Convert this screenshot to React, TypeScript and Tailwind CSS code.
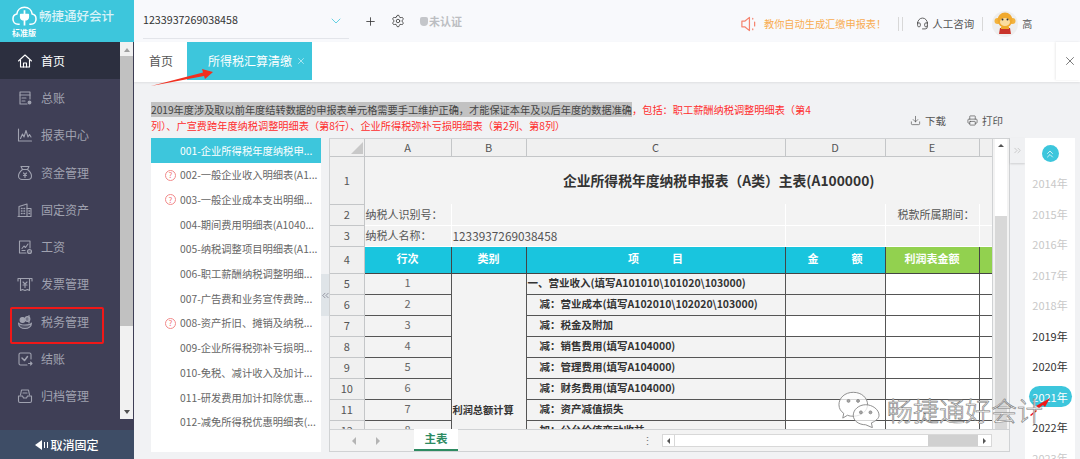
import { ChevronDown, ChevronsLeft, ChevronsRight, ChevronsUp, Headset, Home, Plus, Printer, Settings, Download, X } from "lucide-react"
import type { ReactNode } from "react"

function NavIcon({ children }: { children: ReactNode }) {
  return (
    <svg viewBox="0 0 16 16" className="h-[16px] w-[16px] shrink-0" fill="none" stroke="currentColor" strokeWidth="1.1" strokeLinecap="round" strokeLinejoin="round">
      {children}
    </svg>
  )
}

const nav = [
  {
    name: "首页",
    active: true,
    icon: (
      <>
        <path d="M1.5 8 L8 2 L14.5 8" />
        <path d="M3.5 7 V14 H12.5 V7" />
        <path d="M6.5 14 V10 H9.5 V14" />
      </>
    ),
  },
  {
    name: "总账",
    icon: (
      <>
        <path d="M10 14 H3 V2 H13 V9" />
        <path d="M3 5 H13 M5 8 H9 M5 11 H8" />
        <circle cx="12.5" cy="12.5" r="1.4" fill="currentColor" />
      </>
    ),
  },
  {
    name: "报表中心",
    icon: (
      <>
        <path d="M1.5 2 V14 H14.5" />
        <path d="M3.5 11.5 L5.5 7 L7 10 L9 3.5 L11 10 L12.5 7.5 L14 10" />
      </>
    ),
  },
  {
    name: "资金管理",
    icon: (
      <>
        <path d="M5.5 4.5 L4 1.5 H12 L10.5 4.5" />
        <path d="M5.5 4.5 H10.5 C13 6.5 14.5 9 14.5 11 C14.5 13.5 12.5 14.5 11 14.5 H5 C3.5 14.5 1.5 13.5 1.5 11 C1.5 9 3 6.5 5.5 4.5 Z" />
        <path d="M6.5 8 L8 9.5 L9.5 8 M8 9.5 V12.5 M6.5 10.5 H9.5" />
      </>
    ),
  },
  {
    name: "固定资产",
    icon: (
      <>
        <path d="M2 14.5 V4.5 L10 2 V14.5" />
        <path d="M10 6.5 H14 V14.5 H1" />
        <path d="M4.5 6.5 H5 M7 6.5 H7.5 M4.5 9 H5 M7 9 H7.5 M4.5 11.5 H5 M7 11.5 H7.5 M12 9 H12.5 M12 11.5 H12.5" strokeWidth="1.5" />
      </>
    ),
  },
  {
    name: "工资",
    icon: (
      <>
        <path d="M9 14 H2.5 V2 H13 V9" />
        <path d="M5 9.5 L7 7 L8.5 8.5 L11 5" />
        <path d="M5 11.5 H8" />
        <circle cx="12.5" cy="12.5" r="2" fill="currentColor" fillOpacity="0.4" />
      </>
    ),
  },
  {
    name: "发票管理",
    icon: (
      <>
        <path d="M1 2.5 H15 V5 M1 2.5 V5" />
        <path d="M3.5 2.5 V14.5 L5.5 13.5 L8 14.5 L10.5 13.5 L12.5 14.5 V2.5" />
        <path d="M6 6 L8 8 L10 6 M8 8 V11.5 M6 9 H10" />
      </>
    ),
  },
  {
    name: "税务管理",
    icon: (
      <>
        <path d="M1.5 9 C1.5 12.5 4.5 14.5 8 14.5 C11.5 14.5 14.5 12.5 14.5 9 C14 10.5 12 11 8 11 C4 11 2.5 10.5 1.5 9 Z" fill="currentColor" fillOpacity="0.25" />
        <circle cx="5.5" cy="6" r="2.4" fill="currentColor" />
        <circle cx="10.5" cy="5" r="2.4" fill="currentColor" fillOpacity="0.55" />
        <path d="M12 1.5 V9" />
      </>
    ),
  },
  {
    name: "结账",
    icon: (
      <>
        <path d="M14 8 V3.5 C14 2.5 13.5 2 12.5 2 H3.5 C2.5 2 2 2.5 2 3.5 V12.5 C2 13.5 2.5 14 3.5 14 H10" />
        <path d="M5 7 L7.5 9.5 L10.5 5.5" strokeWidth="1.5" />
        <path d="M11.5 12.5 H15 M13.5 11 L15 12.5 L13.5 14" />
      </>
    ),
  },
  {
    name: "归档管理",
    icon: (
      <>
        <path d="M3.5 7 L4.5 2 H11.5 L12.5 7" />
        <path d="M1.5 8 H5.5 L6.5 10 H9.5 L10.5 8 H14.5 V13 C14.5 14 14 14.5 13 14.5 H3 C2 14.5 1.5 14 1.5 13 Z" />
        <path d="M6 5 H10" />
      </>
    ),
  },
]

const forms = [
  { name: "001-企业所得税年度纳税申...", active: true },
  { name: "002-一般企业收入明细表(A1...", warn: true },
  { name: "003-一般企业成本支出明细...", warn: true },
  { name: "004-期间费用明细表(A1040..." },
  { name: "005-纳税调整项目明细表(A1..." },
  { name: "006-职工薪酬纳税调整明细..." },
  { name: "007-广告费和业务宣传费跨..." },
  { name: "008-资产折旧、摊销及纳税...", warn: true },
  { name: "009-企业所得税弥补亏损明..." },
  { name: "010-免税、减计收入及加计..." },
  { name: "011-研发费用加计扣除优惠..." },
  { name: "012-减免所得税优惠明细表(..." },
]

const years = ["2014年", "2015年", "2016年", "2017年", "2018年", "2019年", "2020年", "2021年", "2022年", "2023年"]

const rows = [
  { num: 5, line: "1", item: "一、营业收入(填写A101010\\101020\\103000)", indent: false, dGray: true },
  { num: 6, line: "2", item: "减：营业成本(填写A102010\\102020\\103000)", indent: true, dGray: true },
  { num: 7, line: "3", item: "减：税金及附加", indent: true, dGray: false },
  { num: 8, line: "4", item: "减：销售费用(填写A104000)", indent: true, dGray: true },
  { num: 9, line: "5", item: "减：管理费用(填写A104000)", indent: true, dGray: true },
  { num: 10, line: "6", item: "减：财务费用(填写A104000)", indent: true, dGray: true },
  { num: 11, line: "7", item: "减：资产减值损失", indent: true, dGray: false },
  { num: 12, line: "8", item: "加：公允价值变动收益", indent: true, dGray: false },
  { num: 13, line: "9", item: "", indent: true, dGray: false },
  { num: 14, line: "10", item: "", indent: true, dGray: false },
  { num: 15, line: "11", item: "", indent: true, dGray: false },
  { num: 16, line: "12", item: "", indent: true, dGray: false },
  { num: 17, line: "13", item: "", indent: true, dGray: false },
]

const headCell = "border-r border-b border-[#c4c6c8] bg-[#f0f0f0] p-0 text-center text-[11px] font-normal text-[#555]"
const blankCell = "border-r border-b border-white bg-[#f3f3f3] p-0"
const dataCell = "border-r border-b border-[#555] h-[21px] p-0"

function Logo() {
  return (
    <svg viewBox="0 0 26 20" className="h-[20px] w-[25px] shrink-0 text-white" fill="none" stroke="currentColor" strokeWidth="1.6" strokeLinejoin="round">
      <path d="M8 18.5 H6.5 C3 18.5 1 16 1 13 C1 10.5 2.5 8.5 5 8 C5.5 4 8.5 1 13 1 C17.5 1 20.5 4 21 8 C23.5 8.5 25 10.5 25 13 C25 16 23 18.5 19.5 18.5 H18" />
      <path d="M9 8.5 H17 V11 C17 13 15.5 14 13 14 C10.5 14 9 13 9 11 Z" fill="currentColor" />
      <path d="M13 4 V8 M13 14 V20" strokeWidth="1.8" />
    </svg>
  )
}

function Speaker() {
  return (
    <svg viewBox="0 0 18 18" className="h-[18px] w-[17px] shrink-0" fill="none" stroke="#f5836e" strokeWidth="1.3" strokeLinejoin="round">
      <path d="M2 6 H5 L10 2 V16 L5 12 H2 Z" />
      <path d="M13.5 3 V3.8 M15.5 7 V11 M13.5 14.2 V15" strokeLinecap="round" />
    </svg>
  )
}

function Monkey() {
  return (
    <div className="flex h-[26px] w-[26px] shrink-0 items-center justify-center rounded-full bg-[#eeeeee]">
      <svg viewBox="0 0 26 26" className="h-[26px] w-[26px]">
        <circle cx="5.5" cy="10" r="3" fill="#f3b33d" />
        <circle cx="20.5" cy="10" r="3" fill="#f3b33d" />
        <circle cx="13" cy="9" r="7.5" fill="#f0a92e" />
        <ellipse cx="13" cy="11" rx="5" ry="4" fill="#fbdca0" />
        <circle cx="10.5" cy="8.5" r="1" fill="#333" />
        <circle cx="15.5" cy="8.5" r="1" fill="#333" />
        <path d="M8 17 H18 L19 23 H7 Z" fill="#c9342b" />
        <path d="M9 15.5 H17 V18 H9 Z" fill="#f0a92e" />
      </svg>
    </div>
  )
}

function Watermark() {
  return (
    <div className="pointer-events-none absolute left-[838px] top-[391px] flex items-center gap-[7px]">
      <svg viewBox="0 0 44 38" className="h-[37px] w-[42px] shrink-0" fill="#ffffff" fillOpacity="0.75" stroke="#8a8a8a" strokeWidth="1">
        <path d="M16 1 C7 1 1 7 1 14 C1 18 3 21 6 23 L5 28 L10 25 C12 26 14 26 16 26 C25 26 31 20 31 14 C31 7 25 1 16 1 Z" />
        <path d="M29 14 C22 14 16 19 16 25 C16 31 22 35 29 35 L36 38 L35 33 C40 31 43 28 43 25 C43 19 36 14 29 14 Z" />
        <circle cx="11" cy="10" r="1.5" fill="#8a8a8a" />
        <circle cx="21" cy="10" r="1.5" fill="#8a8a8a" />
        <circle cx="24" cy="22" r="1.5" fill="#8a8a8a" />
        <circle cx="34" cy="22" r="1.5" fill="#8a8a8a" />
      </svg>
      <span className="whitespace-nowrap text-[26px] font-light leading-none text-white [-webkit-text-stroke:0.6px_#777]">畅捷通好会计</span>
    </div>
  )
}

export default function App() {
  return (
    <div className="relative flex h-[459px] w-[1080px] overflow-hidden bg-[#f1f2f4] font-['Noto_Sans_CJK_SC','Noto_Sans',sans-serif] text-[#555]">
      {/* Sidebar */}
      <aside className="flex w-[134px] shrink-0 flex-col bg-[#3f3f56]">
        <div className="h-[42px] shrink-0 bg-[#3dc6dc] pl-[12px] pt-[6px] text-white">
          <div className="flex items-center gap-[2px]">
            <Logo />
            <span className="text-[12.5px] font-medium leading-[20px] opacity-80">畅捷通好会计</span>
          </div>
          <div className="text-[8px] font-bold leading-[13px]">标准版</div>
        </div>
        <div className="flex min-h-0 flex-1">
          <div className="w-[120px]">
            {nav.map((item) => (
              <div
                key={item.name}
                className={`flex h-[37.3px] items-center gap-[8px] pl-[17px] text-[12px] ${item.active ? "bg-[#2c2f3f] text-white" : "text-[#a0a2b0]"}`}
              >
                <NavIcon>{item.icon}</NavIcon>
                <span>{item.name}</span>
              </div>
            ))}
          </div>
          <div className="flex h-[377px] w-[13px] flex-col items-center bg-[#f1f1f1]">
            <div className="mt-[6px] h-0 w-0 border-x-[3px] border-b-[4px] border-x-transparent border-b-[#a0a0a0]" />
            <div className="mt-[4px] h-[270px] w-full bg-[#c1c1c1]" />
            <div className="mt-auto mb-[5px] h-0 w-0 border-x-[3px] border-t-[4px] border-x-transparent border-t-[#505050]" />
          </div>
        </div>
        <div className="flex h-[29px] shrink-0 items-center justify-center bg-[#3e4d66] text-[12px] font-medium text-white">
          <span className="h-0 w-0 border-y-[5px] border-r-[7px] border-y-transparent border-r-white" />
          <span className="mx-[2px] h-[6px] w-[4px] border-x border-white" />
          取消固定
        </div>
      </aside>

      <main className="flex min-w-0 flex-1 flex-col">
        {/* Top bar */}
        <header className="flex h-[42px] shrink-0 items-center bg-[#f8f9fc]">
          <div className="ml-[9px] flex h-[35px] w-[206px] shrink-0 items-center justify-between border-b border-[#e3e5ea] pr-[5px]">
            <span className="text-[10.7px] text-[#333]">1233937269038458</span>
            <ChevronDown size={16} strokeWidth={1.2} className="text-[#3dc6dc]" />
          </div>
          <Plus size={13} strokeWidth={1.5} className="ml-[15px] shrink-0 text-[#333]" />
          <Settings size={14} strokeWidth={1.5} className="ml-[14px] shrink-0 text-[#444]" />
          <span className="ml-[15px] h-[9px] w-[8px] shrink-0 rounded-b-[4px] rounded-t-[2px] bg-[#c4c6ca]" />
          <span className="ml-[1px] shrink-0 text-[11px] font-bold text-[#bcbec2]">未认证</span>
          <div className="mt-[5px] flex shrink-0 items-center">
            <span className="ml-[278px]"><Speaker /></span>
            <span className="ml-[7px] text-[10.2px] text-[#f8ac50]">教你自动生成汇缴申报表！</span>
            <span className="ml-[12px] h-[14px] w-[5px] border-x border-[#d8d8d8]" />
            <Headset size={13} strokeWidth={1.5} className="ml-[13px] text-[#444]" />
            <span className="ml-[3px] text-[10.5px] text-[#555]">人工咨询</span>
            <span className="ml-[8px] h-[14px] w-px bg-[#d8d8d8]" />
            <span className="ml-[9px]"><Monkey /></span>
            <span className="ml-[4px] text-[10px] text-[#555]">高</span>
          </div>
        </header>

        {/* Tabs */}
        <div className="flex h-[40px] shrink-0 bg-white shadow-[0_1px_2px_rgba(0,0,0,0.08)]">
          <div className="flex h-[38px] w-[53px] items-center justify-end pr-[14px] text-[12px] text-[#555]">首页</div>
          <div className="flex h-[38px] w-[125px] items-center bg-[#3dc6dc] pl-[21px] text-[12px] text-white">
            所得税汇算清缴
            <X size={10} strokeWidth={1.3} className="ml-[4px]" />
          </div>
          <div className="ml-auto flex h-[38px] w-[24px] items-center justify-center bg-white shadow-[-1px_0_2px_rgba(0,0,0,0.08)]">
            <X size={14} strokeWidth={1.2} className="ml-[4px] text-[#444]" />
          </div>
        </div>

        {/* Notice */}
        <div className="relative h-[56px] shrink-0 pl-[17px] pt-[20px] text-[10.2px] leading-[15.5px]">
          <p className="w-[665px] text-[#ff2d2d]">
            <span className="bg-[#c2c2c2] text-[#444]">2019年度涉及取以前年度结转数据的申报表单元格需要手工维护正确，才能保证本年及以后年度的数据准确</span>
            ，包括：职工薪酬纳税调整明细表（第4列）、广宣费跨年度纳税调整明细表（第8行）、企业所得税弥补亏损明细表（第2列、第8列）
          </p>
          <div className="absolute right-[77px] top-[31px] flex items-center text-[10.5px] text-[#555]">
            <Download size={11} strokeWidth={1.5} />
            <span className="ml-[4px]">下载</span>
            <Printer size={11} strokeWidth={1.5} className="ml-[21px]" />
            <span className="ml-[4px]">打印</span>
          </div>
        </div>

        <div className="flex min-h-0 flex-1">
          {/* Form list */}
          <div className="ml-[17px] mb-[7px] w-[170px] shrink-0 bg-white">
            {forms.map((f) => (
              <div
                key={f.name}
                className={`flex h-[24.7px] items-center whitespace-nowrap pl-[29px] text-[10.3px] ${f.active ? "bg-[#3dc6dc] text-white" : "text-[#666]"}`}
              >
                {f.warn && (
                  <span className="-ml-[15px] mr-[4px] flex h-[11px] w-[11px] shrink-0 items-center justify-center rounded-full border border-[#f28a8a] text-[8px] leading-none text-[#f27070]">?</span>
                )}
                {f.name}
              </div>
            ))}
          </div>

          {/* Collapse handle */}
          <div className="mb-[7px] flex w-[8px] shrink-0 items-center">
            <div className="flex h-[42px] w-full items-center justify-center bg-[#dfe4e8]">
              <ChevronsLeft size={11} strokeWidth={1.2} className="shrink-0 text-[#556]" />
            </div>
          </div>

          {/* Spreadsheet */}
          <div className="mb-[7px] flex w-[681px] shrink-0 flex-col border border-[#d0d2d4] bg-[#f3f3f3]">
            <div className="flex min-h-0 flex-1">
              <div className="min-w-0 flex-1 overflow-hidden">
                <table className="w-[663px] table-fixed border-collapse text-[11px]">
                  <colgroup>
                    <col className="w-[34px]" />
                    <col className="w-[87px]" />
                    <col className="w-[75px]" />
                    <col className="w-[259px]" />
                    <col className="w-[100px]" />
                    <col className="w-[94px]" />
                    <col className="w-[14px]" />
                  </colgroup>
                  <tbody>
                    <tr className="h-[16px]">
                      <td className={headCell}>
                        <div className="ml-auto mr-[1px] mt-[2px] h-0 w-0 border-b-[12px] border-l-[12px] border-b-[#c8c8c8] border-l-transparent" />
                      </td>
                      {["A", "B", "C", "D", "E", ""].map((c, i) => (
                        <td key={i} className={headCell}>{c}</td>
                      ))}
                    </tr>
                    <tr className="h-[48px]">
                      <td className={headCell}>1</td>
                      <td colSpan={6} className="bg-[#f3f3f3] pl-[80px] text-center text-[13.8px] font-bold text-[#333]">
                        企业所得税年度纳税申报表（A类）主表(A100000)
                      </td>
                    </tr>
                    <tr className="h-[21px]">
                      <td className={headCell}>2</td>
                      <td className={`${blankCell} pl-[1px]`}>纳税人识别号：</td>
                      <td colSpan={2} className={blankCell} />
                      <td className={blankCell} />
                      <td className={`${blankCell} pl-[12px] whitespace-nowrap`}>税款所属期间：</td>
                      <td className={blankCell} />
                    </tr>
                    <tr className="h-[21px]">
                      <td className={headCell}>3</td>
                      <td className={`${blankCell} pl-[1px]`}>纳税人名称：</td>
                      <td colSpan={2} className={`${blankCell} pl-[1px] text-[11.8px]`}>1233937269038458</td>
                      <td className={blankCell} />
                      <td className={blankCell} />
                      <td className={blankCell} />
                    </tr>
                    <tr className="h-[27px] font-bold text-white">
                      <td className={headCell}>4</td>
                      <td className="border-r border-b border-[#444] bg-[#19c5de] p-0 pb-[2px] text-center">行次</td>
                      <td className="border-r border-b border-[#444] bg-[#19c5de] p-0 pb-[2px] text-center">类别</td>
                      <td className="border-r border-b border-[#444] bg-[#19c5de] p-0 pb-[2px] text-center whitespace-pre">项　　　目</td>
                      <td className="border-r border-b border-[#444] bg-[#19c5de] p-0 pb-[2px] text-center whitespace-pre">金　　　额</td>
                      <td className="border-r border-b border-[#444] bg-[#92d14f] p-0 pb-[2px] text-center">利润表金额</td>
                      <td className="border-b border-[#444] bg-[#92d14f] p-0" />
                    </tr>
                    {rows.map((r, i) => (
                      <tr key={r.num} className="h-[21px]">
                        <td className={headCell}>{r.num}</td>
                        <td className={`${dataCell} pb-[2px] bg-[#f3f3f3] text-center text-[#666]`}>{r.line}</td>
                        {i === 0 && (
                          <td rowSpan={13} className="border-r border-b border-[#555] bg-[#f3f3f3] p-0 pl-[1px] text-[10.2px] font-bold whitespace-nowrap text-[#333]">
                            利润总额计算
                          </td>
                        )}
                        <td className={`${dataCell} pb-[2px] bg-[#f3f3f3] whitespace-nowrap text-[10.5px] font-bold text-[#333] ${r.indent ? "pl-[13px]" : "pl-[1px]"}`}>{r.item}</td>
                        <td className={`${dataCell} ${r.dGray ? "bg-[#f3f3f3]" : "bg-white"}`} />
                        <td className={`${dataCell} bg-white`} />
                        <td className="h-[21px] border-b border-[#555] bg-white p-0" />
                      </tr>
                    ))}
                  </tbody>
                </table>
              </div>
              {/* Vertical scrollbar */}
              <div className="flex w-[17px] shrink-0 flex-col border-l border-[#d0d2d4] bg-[#f3f3f3] px-[2px]">
                <div className="flex h-[13px] items-center justify-center bg-white">
                  <div className="h-0 w-0 border-x-[3px] border-b-[3px] border-x-transparent border-b-[#555]" />
                </div>
                <div className="h-[64px] bg-white" />
                <div className="flex-1 bg-[#d8d8d8]" />
              </div>
            </div>
            {/* Sheet tabs */}
            <div className="flex h-[22px] shrink-0 items-center border-t border-[#d0d2d4] bg-[#f3f3f3]">
              <div className="ml-[22px] h-0 w-0 border-y-[4px] border-r-[4px] border-y-transparent border-r-[#b4b4b4]" />
              <div className="ml-[20px] h-0 w-0 border-y-[4px] border-l-[4px] border-y-transparent border-l-[#b4b4b4]" />
              <div className="ml-[34px] -mt-[1px] flex h-[22px] w-[44px] shrink-0 items-center justify-center border-b-2 border-[#2e8b62] bg-white text-[11.5px] font-bold text-[#2e8b62]">主表</div>
              <span className="ml-[184px] text-[11px] leading-none text-[#777]">⋮</span>
              <div className="ml-[9px] flex h-[13px] w-[330px] shrink-0 items-stretch border border-[#d8d8d8]">
                <div className="flex w-[12px] items-center justify-center border-r border-[#d8d8d8] bg-white">
                  <div className="h-0 w-0 border-y-[3px] border-r-[3px] border-y-transparent border-r-[#555]" />
                </div>
                <div className="w-[253px] bg-white" />
                <div className="flex-1 bg-[#d0d0d0]" />
                <div className="flex w-[13px] items-center justify-center bg-white">
                  <div className="h-0 w-0 border-y-[3px] border-l-[3px] border-y-transparent border-l-[#555]" />
                </div>
              </div>
            </div>
          </div>

          {/* Expand handle */}
          <div className="flex h-[25px] w-[15px] shrink-0 items-center justify-center bg-[#f0f1f3] shadow-[0_1px_2px_rgba(0,0,0,0.15)]">
            <ChevronsRight size={11} strokeWidth={1.2} className="text-[#aaa]" />
          </div>

          {/* Years */}
          <div className="flex w-[50px] shrink-0 flex-col items-center bg-white">
            <div className="mb-[6px] mt-[7px] flex h-[17px] w-[17px] shrink-0 items-center justify-center rounded-full bg-[#3dc6dc]">
              <ChevronsUp size={12} strokeWidth={1.5} className="text-white" />
            </div>
            {years.map((y, i) => (
              <div
                key={y}
                className={`flex h-[30.5px] w-full shrink-0 items-center justify-center text-[11px] ${i < 5 || i === 9 ? "text-[#c8c8c8]" : "text-[#333]"}`}
              >
                {i === 7 ? <span className="flex h-[21px] w-[43px] items-center justify-center rounded-full bg-[#3dc6dc] text-white">{y}</span> : y}
              </div>
            ))}
          </div>
        </div>
      </main>

      {/* Annotations drawn over the screenshot */}
      <div className="pointer-events-none absolute left-[10px] top-[307px] h-[37px] w-[94px] rounded-[2px] border-[2px] border-[#f01818]" />
      <svg viewBox="0 0 70 20" className="pointer-events-none absolute left-[150px] top-[67px] h-[20px] w-[70px]">
        <path d="M1 19 L53 5.5 L52 2 L63 5 L55 12 L54 9 Z" fill="#f03020" />
      </svg>
      <svg viewBox="0 0 26 20" className="pointer-events-none absolute left-[1028px] top-[396px] h-[20px] w-[26px]">
        <path d="M2 19 L8 14 L9 15 L3 20 Z M8 10 L22 2 L17 11 L15 9 L11 12 Z" fill="#f01818" />
      </svg>
      <Watermark />
    </div>
  )
}
